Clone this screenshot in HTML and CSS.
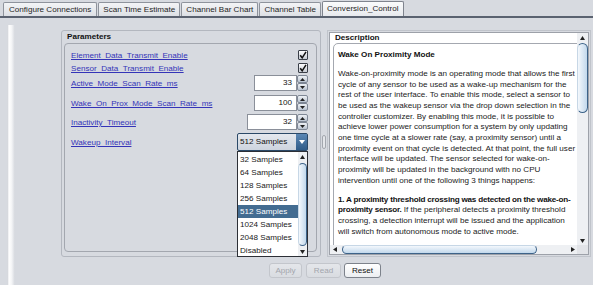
FILE: index.html
```html
<!DOCTYPE html>
<html>
<head>
<meta charset="utf-8">
<link rel="stylesheet" href="styles.css">
</head>
<body>
<div class="tabs">
  <div class="tab">Configure Connections</div>
  <div class="tab">Scan Time Estimate</div>
  <div class="tab">Channel Bar Chart</div>
  <div class="tab">Channel Table</div>
  <div class="tab active">Conversion_Control</div>
</div>
<div class="main">
  <div class="sidebar"></div>
  <div class="content">
    <div class="panels">
      <div class="params">
        <div class="ptitle">Parameters</div>
        <div class="pinner">
          <div class="row r-check">
            <a class="lbl">Element_Data_Transmit_Enable</a>
            <span class="check"><svg width="8" height="8" viewBox="0 0 8 8"><path d="M1.2 4.2 L3.2 6.8 L7 0.8" fill="none" stroke="#111" stroke-width="1.5"/></svg></span>
          </div>
          <div class="row r-check m1">
            <a class="lbl">Sensor_Data_Transmit_Enable</a>
            <span class="check"><svg width="8" height="8" viewBox="0 0 8 8"><path d="M1.2 4.2 L3.2 6.8 L7 0.8" fill="none" stroke="#111" stroke-width="1.5"/></svg></span>
          </div>
          <div class="row r-spin m1">
            <a class="lbl">Active_Mode_Scan_Rate_ms</a>
            <div class="spin">
              <div class="field">33</div>
              <div class="sbtn">
                <span><svg width="5" height="3" viewBox="0 0 5 3"><path d="M0 3 L2.5 0 L5 3Z" fill="#222"/></svg></span>
                <span><svg width="5" height="3" viewBox="0 0 5 3"><path d="M0 0 L2.5 3 L5 0Z" fill="#222"/></svg></span>
              </div>
            </div>
          </div>
          <div class="row r-spin m4">
            <a class="lbl">Wake_On_Prox_Mode_Scan_Rate_ms</a>
            <div class="spin">
              <div class="field">100</div>
              <div class="sbtn">
                <span><svg width="5" height="3" viewBox="0 0 5 3"><path d="M0 3 L2.5 0 L5 3Z" fill="#222"/></svg></span>
                <span><svg width="5" height="3" viewBox="0 0 5 3"><path d="M0 0 L2.5 3 L5 0Z" fill="#222"/></svg></span>
              </div>
            </div>
          </div>
          <div class="row r-spin m3">
            <a class="lbl">Inactivity_Timeout</a>
            <div class="spin">
              <div class="field wide">32</div>
              <div class="sbtn">
                <span><svg width="5" height="3" viewBox="0 0 5 3"><path d="M0 3 L2.5 0 L5 3Z" fill="#222"/></svg></span>
                <span><svg width="5" height="3" viewBox="0 0 5 3"><path d="M0 0 L2.5 3 L5 0Z" fill="#222"/></svg></span>
              </div>
            </div>
          </div>
          <div class="row r-combo m3">
            <a class="lbl">Wakeup_Interval</a>
            <div class="combo">
              <div class="ctext">512 Samples</div>
              <div class="carrow"><svg width="6" height="4" viewBox="0 0 6 4"><path d="M0 0 L3 4 L6 0Z" fill="#fff"/></svg></div>
            </div>
          </div>
        </div>
        <div class="droplist">
          <div class="items">
            <div class="item">32 Samples</div>
            <div class="item">64 Samples</div>
            <div class="item">128 Samples</div>
            <div class="item">256 Samples</div>
            <div class="item sel">512 Samples</div>
            <div class="item">1024 Samples</div>
            <div class="item">2048 Samples</div>
            <div class="item">Disabled</div>
          </div>
          <div class="lscroll">
            <div class="arr"><svg width="5" height="4" viewBox="0 0 5 4"><path d="M0 4 L2.5 0 L5 4Z" fill="#222"/></svg></div>
            <div class="lthumb"></div>
            <div class="arr"><svg width="5" height="4" viewBox="0 0 5 4"><path d="M0 0 L2.5 4 L5 0Z" fill="#222"/></svg></div>
          </div>
        </div>
      </div>
      <div class="splitter"><div class="grip"></div></div>
      <div class="desc">
        <div class="scroll">
          <div class="srow">
            <div class="viewport">
              <div class="dtitle">Description</div>
              <div class="dbox">
                <div class="dhead">Wake On Proximity Mode</div>
                <p class="dpara">Wake-on-proximity mode is an operating mode that allows the first<br>cycle of any sensor to be used as a wake-up mechanism for the<br>rest of the user interface. To enable this mode, select a sensor to<br>be used as the wakeup sensor via the drop down selection in the<br>controller customizer. By enabling this mode, it is possible to<br>achieve lower power consumption for a system by only updating<br>one time cycle at a slower rate (say, a proximity sensor) until a<br>proximity event on that cycle is detected. At that point, the full user<br>interface will be updated. The sensor selected for wake-on-<br>proximity will be updated in the background with no CPU<br>intervention until one of the following 3 things happens:</p>
                <p class="dpara second"><b>1. A proximity threshold crossing was detected on the wake-on-<br>proximity sensor.</b> If the peripheral detects a proximity threshold<br>crossing, a detection interrupt will be issued and the application<br>will switch from autonomous mode to active mode.</p>
              </div>
            </div>
            <div class="vscroll">
              <div class="arr"><svg width="5" height="4" viewBox="0 0 5 4"><path d="M0 4 L2.5 0 L5 4Z" fill="#222"/></svg></div>
              <div class="vthumb"></div>
              <div class="arr bottom"><svg width="5" height="4" viewBox="0 0 5 4"><path d="M0 0 L2.5 4 L5 0Z" fill="#222"/></svg></div>
            </div>
          </div>
          <div class="hrow">
            <div class="hscroll">
              <div class="harr"><svg width="4" height="5" viewBox="0 0 4 5"><path d="M4 0 L0 2.5 L4 5Z" fill="#222"/></svg></div>
              <div class="hthumb"></div>
              <div class="hspace"></div>
              <div class="harr"><svg width="4" height="5" viewBox="0 0 4 5"><path d="M0 0 L4 2.5 L0 5Z" fill="#222"/></svg></div>
            </div>
            <div class="corner"></div>
          </div>
        </div>
      </div>
    </div>
    <div class="buttons">
      <div class="btn dis apply">Apply</div>
      <div class="btn dis read">Read</div>
      <div class="btn reset">Reset</div>
    </div>
  </div>
</div>
</body>
</html>
```

FILE: styles.css
```css
html, body {
  margin: 0;
  padding: 0;
}
body {
  width: 593px;
  height: 285px;
  overflow: hidden;
  background: #d7dae0;
  font-family: "Liberation Sans", Arial, sans-serif;
  font-size: 8.1px;
  color: #1e1e1e;
}

/* tabs */
.tabs {
  height: 16px;
  display: flex;
  align-items: flex-end;
  padding-left: 3px;
  border-bottom: 2px solid #5a6270;
}
.tab {
  height: 14px;
  line-height: 13px;
  padding: 0 4px;
  box-sizing: border-box;
  border: 1px solid #8e939c;
  border-bottom: none;
  border-radius: 2px 2px 0 0;
  background: linear-gradient(#f3f4f6, #dde0e5);
  margin-right: 1px;
  white-space: nowrap;
}
.tab:first-child {
  padding: 0 5px;
}
.tab.active {
  height: 15px;
  line-height: 14px;
  background: linear-gradient(#fafbfc, #e8eaee);
  border-color: #7f848e;
}

/* main area */
.main {
  display: flex;
  height: 267px;
}
.sidebar {
  margin: 7px 0 0 7px;
  width: 8px;
  background: linear-gradient(to right, #c9ccd3, #ffffff 25%, #f3f4f6 60%, #d4d7dd);
}
.content {
  margin-left: 46px;
  display: flex;
  flex-direction: column;
}
.panels {
  margin-top: 12px;
  display: flex;
  height: 227px;
}

/* parameters */
.params {
  position: relative;
  width: 260px;
  box-sizing: border-box;
  border: 1px solid #b3b7bf;
  border-radius: 3px;
  display: flex;
  flex-direction: column;
  padding: 0 3px 4px 2px;
}
.ptitle {
  font-weight: bold;
  height: 12px;
  line-height: 12px;
  padding-left: 3px;
  color: #111;
}
.pinner {
  flex: 1;
  border: 1px solid #a3a7af;
  border-radius: 4px;
  padding: 5px 8px 0 6px;
}
.row {
  display: flex;
  align-items: center;
  justify-content: space-between;
}
.r-check { height: 12px; }
.r-spin { height: 16px; }
.r-combo { height: 18px; }
.m1 { margin-top: 1px; }
.m3 { margin-top: 3px; }
.m4 { margin-top: 4px; }
.lbl {
  color: #3434b8;
  text-decoration: underline;
  white-space: nowrap;
}
.check {
  width: 8px;
  height: 8px;
  border: 1px solid #3a3f48;
  border-radius: 1px;
  background: linear-gradient(#fdfdfe, #c6cbd3);
  display: flex;
}
.spin {
  display: flex;
  height: 16px;
}
.field {
  width: 43px;
  box-sizing: border-box;
  border: 1px solid #8a8f99;
  background: #fff;
  text-align: right;
  padding-right: 4px;
  line-height: 14px;
  color: #111;
}
.field.wide { width: 50px; }
.sbtn {
  width: 11px;
  display: flex;
  flex-direction: column;
}
.sbtn span {
  flex: 1;
  border: 1px solid #7e8795;
  border-radius: 2px;
  background: linear-gradient(#eef1f5, #bac4d1);
  display: flex;
  align-items: center;
  justify-content: center;
}
.combo {
  width: 71px;
  height: 18px;
  box-sizing: border-box;
  border: 1px solid #2b4968;
  border-radius: 2px;
  display: flex;
  background: linear-gradient(#e4e8ee, #cdd4de);
}
.ctext {
  flex: 1;
  padding-left: 2px;
  line-height: 16px;
  color: #111;
}
.carrow {
  width: 11px;
  background: linear-gradient(#5b87b4, #2f5b88);
  display: flex;
  align-items: center;
  justify-content: center;
}

/* dropdown popup */
.droplist {
  position: absolute;
  left: 175px;
  top: 120px;
  width: 71px;
  height: 106px;
  box-sizing: border-box;
  border: 1px solid #2c2f36;
  background: #fff;
  display: flex;
  z-index: 2;
}
.items {
  width: 60px;
  padding-top: 1px;
}
.item {
  height: 13px;
  line-height: 13px;
  padding-left: 2px;
  color: #1a1a1a;
  white-space: nowrap;
}
.item.sel {
  background: #436c91;
  color: #fff;
}
.lscroll {
  flex: 1;
  display: flex;
  flex-direction: column;
  background: #eef0f3;
}
.arr {
  height: 9px;
  display: flex;
  align-items: center;
  justify-content: center;
}
.lthumb {
  flex: 1;
  margin: 2px 0 1px 0;
  border: 1px solid #3d6389;
  border-left-color: #c7d7e6;
  border-radius: 5px;
  background: linear-gradient(to right, #f4f8fc, #c2d8ec);
}

/* splitter */
.splitter {
  width: 6px;
  display: flex;
  align-items: center;
  justify-content: center;
}
.grip {
  width: 2px;
  height: 12px;
  border: 1px solid #a3a7ae;
  border-radius: 2px;
  background: #e4e6ea;
  margin-bottom: 4px;
}

/* description */
.desc {
  width: 264px;
  box-sizing: border-box;
  border: 1px solid #c0c4cb;
  padding: 1px;
}
.scroll {
  height: 100%;
  box-sizing: border-box;
  border: 1px solid #9da1a9;
  display: flex;
  flex-direction: column;
}
.srow {
  flex: 1;
  display: flex;
  min-height: 0;
}
.viewport {
  flex: 1;
  background: #fff;
  overflow: hidden;
}
.dtitle {
  font-weight: bold;
  height: 10px;
  line-height: 10px;
  padding-left: 5px;
  color: #111;
}
.dbox {
  margin-left: 3px;
  width: 262px;
  height: 240px;
  border: 1px solid #a4a8b0;
  border-radius: 5px;
  padding: 6px 0 0 4px;
  white-space: nowrap;
  color: #222;
  line-height: 10.65px;
}
.dhead {
  font-weight: bold;
  color: #111;
}
.dpara {
  margin: 8.4px 0 0 0;
}
.dpara.second {
  margin-top: 8.5px;
}
.dpara b {
  color: #111;
  letter-spacing: -0.2px;
}
.vscroll {
  width: 11px;
  background: #eef0f3;
  display: flex;
  flex-direction: column;
}
.vthumb {
  height: 68px;
  margin-top: 1px;
  border: 1px solid #3d6389;
  border-left-color: #c7d7e6;
  border-radius: 6px;
  background: linear-gradient(to right, #f4f8fc, #c2d8ec);
}
.arr.bottom { margin-top: auto; }
.hrow {
  height: 9px;
  display: flex;
}
.hscroll {
  flex: 1;
  display: flex;
  background: #eef0f3;
}
.harr {
  width: 9px;
  display: flex;
  align-items: center;
  justify-content: center;
}
.hthumb {
  width: 193px;
  margin-left: 3px;
  border: 1px solid #3d6389;
  border-top-color: #c7d7e6;
  border-radius: 6px;
  background: linear-gradient(#f4f8fc, #c2d8ec);
}
.hspace { flex: 1; }
.corner {
  width: 11px;
  background: #e2e4e8;
}

/* buttons */
.buttons {
  display: flex;
  margin-top: 6px;
  padding-left: 208px;
}
.btn {
  height: 15px;
  box-sizing: border-box;
  border: 1px solid #7d828b;
  border-radius: 3px;
  background: linear-gradient(#ffffff, #eceef1);
  display: flex;
  align-items: center;
  justify-content: center;
  color: #111;
}
.btn.dis {
  color: #a3a6ad;
  border-color: #c3c6cc;
  background: linear-gradient(#e4e6ea, #d9dce1);
}
.apply { width: 33px; }
.read { width: 35px; margin-left: 4px; }
.reset { width: 37px; margin-left: 3px; }
```
